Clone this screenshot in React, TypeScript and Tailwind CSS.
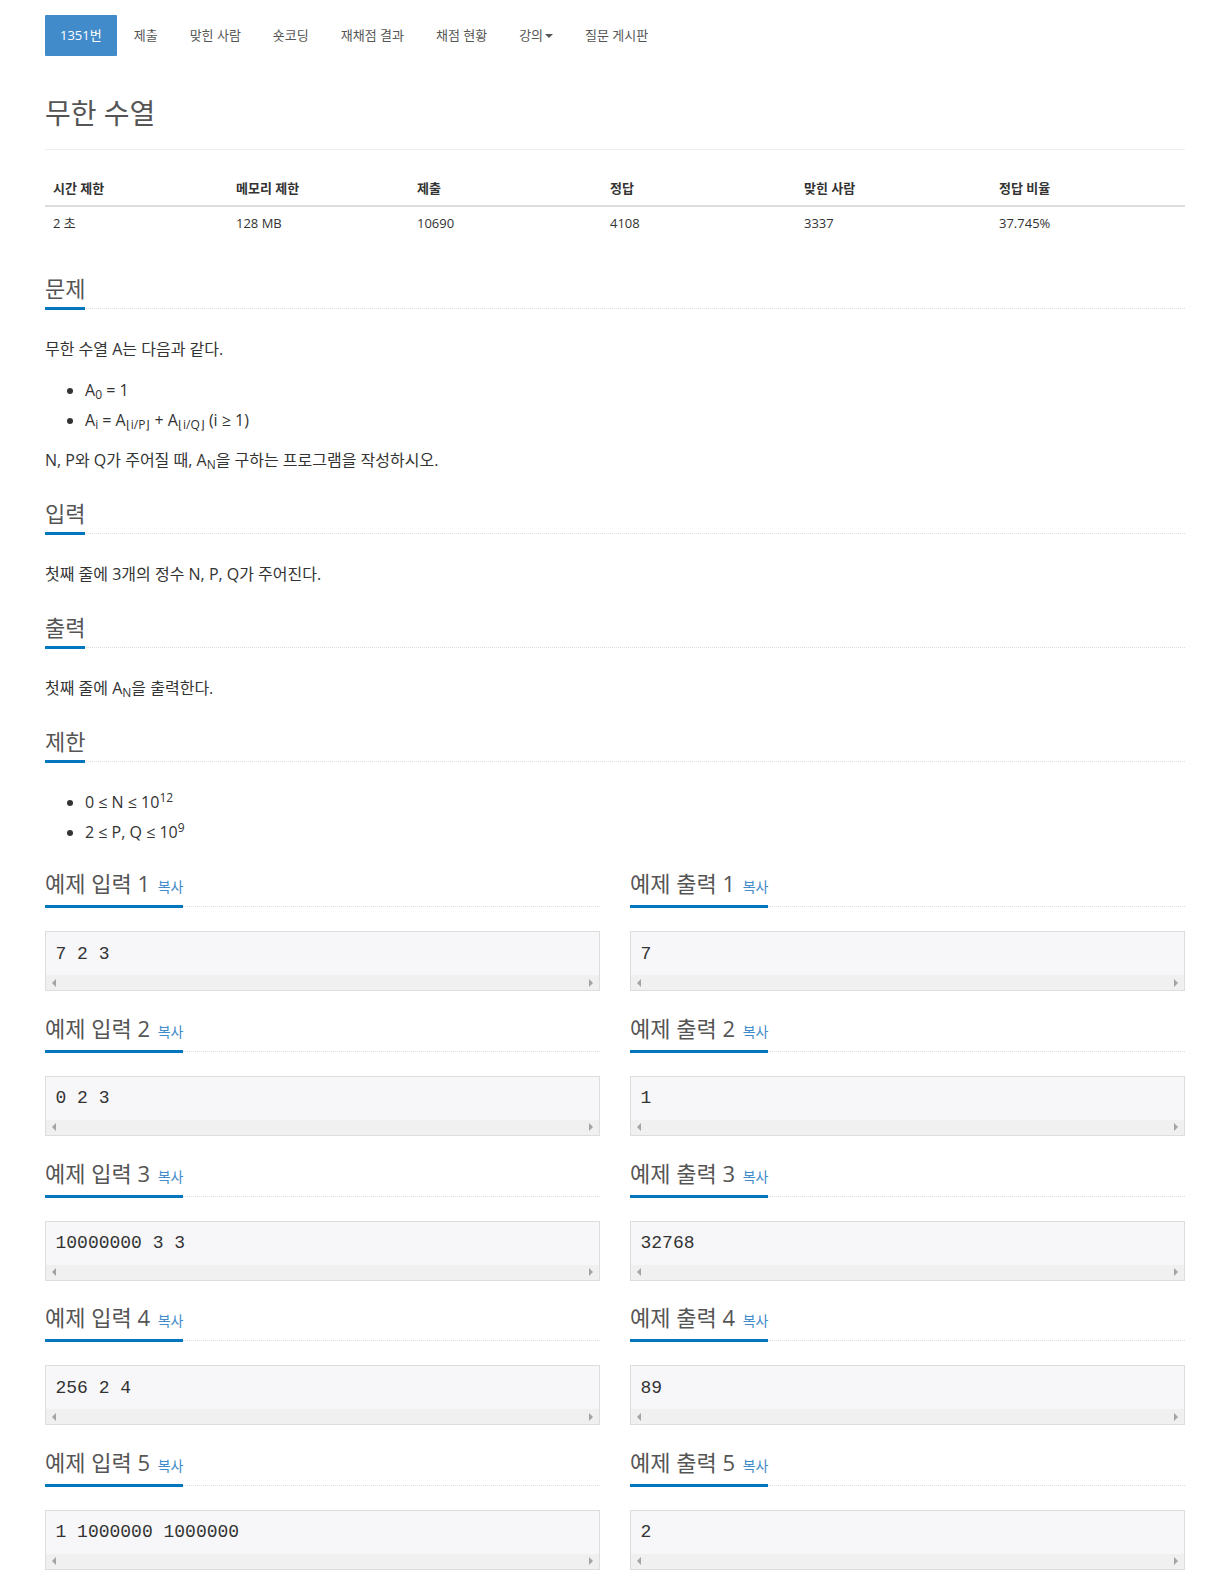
import React from "react";

const FONT = { fontFamily: '"Open Sans", "Noto Sans CJK KR", sans-serif' };

const navItems = ["제출", "맞힌 사람", "숏코딩", "재채점 결과", "채점 현황"];

const stats = [
  { label: "시간 제한", value: "2 초", w: "w-[183px]" },
  { label: "메모리 제한", value: "128 MB", w: "w-[181px]" },
  { label: "제출", value: "10690", w: "w-[193px]" },
  { label: "정답", value: "4108", w: "w-[194px]" },
  { label: "맞힌 사람", value: "3337", w: "w-[195px]" },
  { label: "정답 비율", value: "37.745%", w: "w-[194px]" },
];

const samples = [
  { input: "7 2 3", output: "7" },
  { input: "0 2 3", output: "1" },
  { input: "10000000 3 3", output: "32768" },
  { input: "256 2 4", output: "89" },
  { input: "1 1000000 1000000", output: "2" },
];

const Headline: React.FC<{ children: React.ReactNode; tall?: boolean }> = ({ children, tall }) => (
  <div className="flex border-b border-dotted border-[#ddd]">
    <h2
      className={`-mb-[2px] ${tall ? "h-[38px]" : "h-[35px]"} border-b-[3px] border-[#0076c0] pb-[6px] text-[22px] leading-[26px] font-normal text-[#555] whitespace-pre`}
    >
      {children}
    </h2>
  </div>
);

const SampleBox: React.FC<{ text: string }> = ({ text }) => (
  <div className="mt-[24px] h-[60px] border border-[#ddd] bg-[#f7f7f9] flex flex-col">
    <pre
      className="px-[9.5px] pt-[9.5px] pb-[9.5px] text-[18px] leading-[24px] text-[#333] whitespace-pre"
      style={{ fontFamily: '"Liberation Mono", monospace' }}
    >
      {text}
    </pre>
    <div className="flex-1 bg-[#f0f0f0] flex items-center justify-between px-[6px]">
      <span className="w-0 h-0 border-y-[4px] border-y-transparent border-r-[4px] border-r-[#a3a3a3]" />
      <span className="w-0 h-0 border-y-[4px] border-y-transparent border-l-[4px] border-l-[#a3a3a3]" />
    </div>
  </div>
);

export default function App() {
  return (
    <div className="min-h-[1595px] bg-white text-[#333]" style={FONT}>
      <div className="ml-[45px] w-[1140px] pt-[15px] pb-[25px]">
        {/* tabs */}
        <ul className="flex h-[41px] text-[13px] text-[#555]">
          <li className="flex items-center px-[15px] bg-[#428bca] text-white rounded-[1px]">1351번</li>
          {navItems.map((n) => (
            <li key={n} className="ml-[2px] flex items-center px-[15px]">
              {n}
            </li>
          ))}
          <li className="ml-[2px] flex items-center px-[15px]">
            강의
            <span className="ml-[2px] w-0 h-0 border-x-[4px] border-x-transparent border-t-[4px] border-t-[#555]" />
          </li>
          <li className="ml-[2px] flex items-center px-[15px]">질문 게시판</li>
        </ul>

        {/* title */}
        <div className="pb-[21px] border-b border-[#eee]">
          <h1 className="mt-[42px] text-[28px] leading-[30px] font-normal text-[#555]">무한 수열</h1>
        </div>

        {/* stats table */}
        <table className="mt-[19px] w-full border-collapse text-left">
          <thead>
            <tr className="border-b-2 border-[#ddd]">
              {stats.map((s) => (
                <th
                  key={s.label}
                  className={`${s.w} px-[8px] pt-[10px] pb-[7px] text-[13px] leading-[18.57px] font-bold text-[#333]`}
                >
                  {s.label}
                </th>
              ))}
            </tr>
          </thead>
          <tbody>
            <tr>
              {stats.map((s) => (
                <td key={s.label} className="px-[8px] pt-[7px] pb-[9px] text-[13px] leading-[18.57px] text-[#333]">
                  {s.value}
                </td>
              ))}
            </tr>
          </tbody>
        </table>

        {/* 문제 */}
        <section className="mt-[33.5px]">
          <Headline>문제</Headline>
          <div className="mt-[28px] text-[16px] leading-[24px]">
            <p>무한 수열 A는 다음과 같다.</p>
            <ul className="mt-[14px] pl-[40px] list-disc leading-[30px]">
              <li>
                A<sub>0</sub> = 1
              </li>
              <li>
                A<sub>i</sub> = A<sub>⌊i/P⌋</sub> + A<sub>⌊i/Q⌋</sub> (i ≥ 1)
              </li>
            </ul>
            <p className="mt-[13px]">
              N, P와 Q가 주어질 때, A<sub>N</sub>을 구하는 프로그램을 작성하시오.
            </p>
          </div>
        </section>

        {/* 입력 */}
        <section className="mt-[28px]">
          <Headline>입력</Headline>
          <p className="mt-[28px] text-[16px] leading-[24px]">첫째 줄에 3개의 정수 N, P, Q가 주어진다.</p>
        </section>

        {/* 출력 */}
        <section className="mt-[28px]">
          <Headline>출력</Headline>
          <p className="mt-[28px] text-[16px] leading-[24px]">
            첫째 줄에 A<sub>N</sub>을 출력한다.
          </p>
        </section>

        {/* 제한 */}
        <section className="mt-[28px]">
          <Headline>제한</Headline>
          <ul className="mt-[25px] pl-[40px] list-disc text-[16px] leading-[30px]">
            <li>
              0 ≤ N ≤ 10<sup>12</sup>
            </li>
            <li>
              2 ≤ P, Q ≤ 10<sup>9</sup>
            </li>
          </ul>
        </section>

        {/* samples */}
        <div className="mt-[23.5px] grid grid-cols-2 gap-x-[30px]">
          {samples.map((s, i) => (
            <React.Fragment key={i}>
              <div className={i > 0 ? "mt-[23.7px]" : ""}>
                <Headline tall>
                  예제 입력 {i + 1} <span className="ml-[2px] text-[14px] text-[#428bca]">복사</span>
                </Headline>
                <SampleBox text={s.input} />
              </div>
              <div className={i > 0 ? "mt-[23.7px]" : ""}>
                <Headline tall>
                  예제 출력 {i + 1} <span className="ml-[2px] text-[14px] text-[#428bca]">복사</span>
                </Headline>
                <SampleBox text={s.output} />
              </div>
            </React.Fragment>
          ))}
        </div>
      </div>
    </div>
  );
}
